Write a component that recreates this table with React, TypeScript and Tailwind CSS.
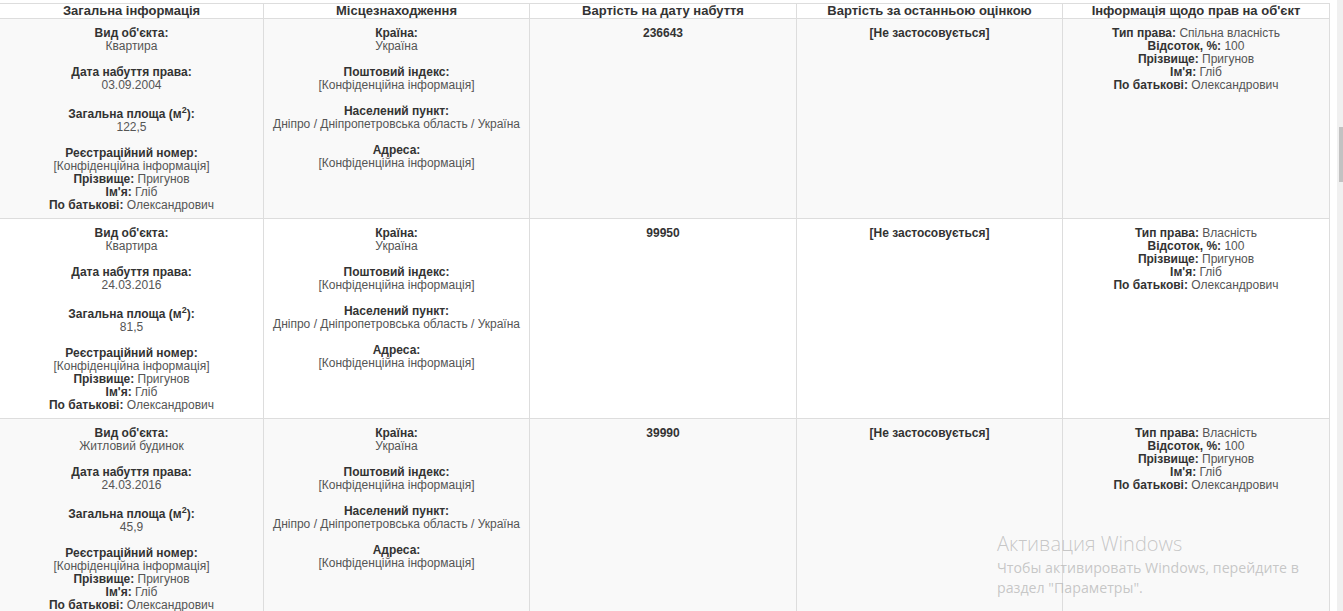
import React from "react";

type Declared = {
  kind: string;
  date: string;
  area: string;
  cost: string;
  right: string;
};

const rows: Declared[] = [
  { kind: "Квартира", date: "03.09.2004", area: "122,5", cost: "236643", right: "Спільна власність" },
  { kind: "Квартира", date: "24.03.2016", area: "81,5", cost: "99950", right: "Власність" },
  { kind: "Житловий будинок", date: "24.03.2016", area: "45,9", cost: "39990", right: "Власність" },
];

const headers = [
  "Загальна інформація",
  "Місцезнаходження",
  "Вартість на дату набуття",
  "Вартість за останньою оцінкою",
  "Інформація щодо прав на об'єкт",
];

const cols = "grid grid-cols-[264px_266px_267px_266px_267px]";
const cell = "border-r border-[#dddddd] text-center";
const secret = "[Конфіденційна інформація]";

const Field = ({ label, value, className = "" }: { label: React.ReactNode; value: string; className?: string }) => (
  <div className={className}>
    <div className="font-bold text-[#333]">{label}</div>
    <div className="text-[#555]">{value}</div>
  </div>
);

const Inline = ({ label, value }: { label: string; value: string }) => (
  <div>
    <span className="font-bold text-[#333]">{label}</span>
    <span className="text-[#555]"> {value}</span>
  </div>
);

const Row = ({ item, odd }: { item: Declared; odd: boolean }) => (
  <div className={`${cols} border-b border-[#dddddd] ${odd ? "bg-[#f9f9f9]" : "bg-white"}`}>
    <div className={`${cell} pt-[8px] pb-[6px]`}>
      <Field label="Вид об'єкта:" value={item.kind} />
      <Field className="mt-[13px]" label="Дата набуття права:" value={item.date} />
      <Field
        className="mt-[16px]"
        label={
          <>
            Загальна площа (м<span className="relative top-[-5px] text-[9px] leading-none">2</span>):
          </>
        }
        value={item.area}
      />
      <Field className="mt-[13px]" label="Реєстраційний номер:" value={secret} />
      <Inline label="Прізвище:" value="Пригунов" />
      <Inline label="Ім'я:" value="Гліб" />
      <Inline label="По батькові:" value="Олександрович" />
    </div>
    <div className={`${cell} pt-[8px]`}>
      <Field label="Країна:" value="Україна" />
      <Field className="mt-[13px]" label="Поштовий індекс:" value={secret} />
      <Field className="mt-[13px]" label="Населений пункт:" value="Дніпро / Дніпропетровська область / Україна" />
      <Field className="mt-[13px]" label="Адреса:" value={secret} />
    </div>
    <div className={`${cell} pt-[8px] font-bold text-[#333]`}>{item.cost}</div>
    <div className={`${cell} pt-[8px] font-bold text-[#333]`}>[Не застосовується]</div>
    <div className={`${cell} pt-[8px]`}>
      <Inline label="Тип права:" value={item.right} />
      <Inline label="Відсоток, %:" value="100" />
      <Inline label="Прізвище:" value="Пригунов" />
      <Inline label="Ім'я:" value="Гліб" />
      <Inline label="По батькові:" value="Олександрович" />
    </div>
  </div>
);

export default function App() {
  return (
    <div className="relative h-[611px] w-[1343px] overflow-hidden bg-white font-['Liberation_Sans',Arial,sans-serif] text-[12px] leading-[13px]">
      <div className="flex">
        <div className="w-[1330px] pt-[3px]">
          <div className={`${cols} h-[16px] border-y border-[#dddddd] bg-white`}>
            {headers.map((h) => (
              <div key={h} className={`${cell} text-[13px] leading-[14px] font-bold text-[#333]`}>
                {h}
              </div>
            ))}
          </div>
          {rows.map((r, i) => (
            <Row key={i} item={r} odd={i % 2 === 0} />
          ))}
        </div>
        <div className="ml-[7px] h-[611px] w-[6px] bg-[#f0f0f0] pt-[127px]">
          <div className="ml-[2px] h-[55px] w-[4px] bg-[#c2c2c2]" />
        </div>
      </div>

      {/* windows activation watermark */}
      <div className="pointer-events-none absolute left-[997px] top-[531px] font-['Open_Sans','Noto_Sans',sans-serif] text-[#b9b9b9]/80">
        <div className="text-[20px] leading-[26px] font-light">Активация Windows</div>
        <div className="mt-[1px] text-[14.2px] leading-[20px]">Чтобы активировать Windows, перейдите в</div>
        <div className="text-[14.2px] leading-[20px]">раздел "Параметры".</div>
      </div>
    </div>
  );
}
